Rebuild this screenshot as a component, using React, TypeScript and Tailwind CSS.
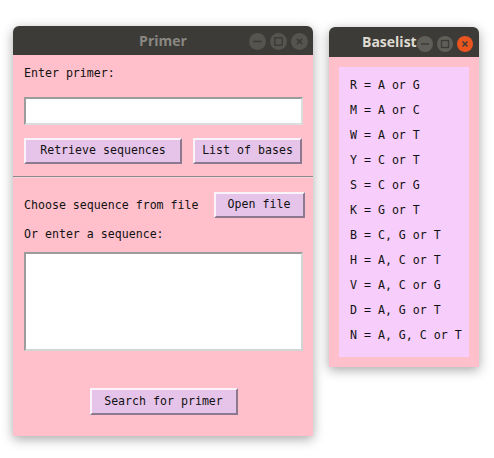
import React from "react";

const mono = { fontFamily: '"DejaVu Sans Mono", "Liberation Mono", monospace' };

function TitleButtons({ active, size }: { active: boolean; size: number }) {
  const base = active ? "#5f5e59" : "#55544f";
  const glyph = "#3c3b37";
  const s = size;
  return (
    <div className="flex gap-[4px]">
      <svg width={s} height={s} viewBox="0 0 16 16">
        <circle cx="8" cy="8" r="8" fill={base} />
        <line x1="4" y1="8" x2="12" y2="8" stroke={glyph} strokeWidth="1.5" />
      </svg>
      <svg width={s} height={s} viewBox="0 0 16 16">
        <circle cx="8" cy="8" r="8" fill={base} />
        <rect x="4.5" y="4.5" width="7" height="7" fill="none" stroke={glyph} strokeWidth="1.3" />
      </svg>
      <svg width={s} height={s} viewBox="0 0 16 16">
        <circle cx="8" cy="8" r="8" fill={active ? "#e9541f" : base} />
        <line x1="5.5" y1="5.5" x2="10.5" y2="10.5" stroke={glyph} strokeWidth="1.5" />
        <line x1="10.5" y1="5.5" x2="5.5" y2="10.5" stroke={glyph} strokeWidth="1.5" />
      </svg>
    </div>
  );
}

function TkButton({ label, className }: { label: string; className?: string }) {
  return (
    <div
      className={
        "shrink-0 whitespace-nowrap flex items-center justify-center bg-[#e6c4ea] border-2 border-t-[#fbf3fa] border-l-[#fbf3fa] border-b-[#8c798f] border-r-[#8c798f] text-[#111] text-[11.6px] " +
        (className ?? "")
      }
      style={mono}
    >
      {label}
    </div>
  );
}

const bases = [
  "R = A or G",
  "M = A or C",
  "W = A or T",
  "Y = C or T",
  "S = C or G",
  "K = G or T",
  "B = C, G or T",
  "H = A, C or T",
  "V = A, C or G",
  "D = A, G or T",
  "N = A, G, C or T",
];

export default function App() {
  return (
    <div className="relative w-[494px] h-[458px] bg-white overflow-hidden">
      {/* Primer window */}
      <div className="absolute left-[13px] top-[26px] w-[300px] h-[410px] flex flex-col shadow-[0_3px_12px_rgba(0,0,0,0.35)] rounded-t-[6px]">
        <div className="h-[29px] bg-[#3c3b37] rounded-t-[6px] flex items-center relative">
          <div
            className="flex-1 text-center text-[14px] font-bold text-[#8a8882]"
            style={{ fontFamily: '"Open Sans", "DejaVu Sans", sans-serif' }}
          >
            Primer
          </div>
          <div className="absolute right-[5px] top-[7px]">
            <TitleButtons active={false} size={17} />
          </div>
        </div>
        <div className="flex-1 bg-[#ffc0cb] flex flex-col pl-[11px] pr-[10px] text-[#111] text-[11.6px]" style={mono}>
          <div className="mt-[10px] h-[16px] leading-[16px] whitespace-nowrap">Enter primer:</div>
          <div className="mt-[16px] h-[28px] bg-white border-2 border-t-[#9c9c9c] border-l-[#9c9c9c] border-b-[#dcdcdc] border-r-[#dcdcdc]" />
          <div className="mt-[13px] h-[26px] flex">
            <TkButton label="Retrieve sequences" className="w-[158px] h-[26px]" />
            <TkButton label="List of bases" className="w-[109px] h-[26px] ml-auto mr-[1px]" />
          </div>
          <div className="mt-[12px] -ml-[11px] -mr-[10px] h-[2px] border-t border-t-[#8e8a8b] border-b border-b-[#f3d3d9]" />
          <div className="mt-[14px] h-[26px] flex items-center">
            <div className="h-[16px] leading-[16px] whitespace-nowrap shrink-0">Choose sequence from file</div>
            <TkButton label="Open file" className="w-[91px] h-[26px] ml-[15px]" />
          </div>
          <div className="mt-[8px] h-[16px] leading-[16px] whitespace-nowrap">Or enter a sequence:</div>
          <div className="mt-[10px] h-[99px] bg-white border-2 border-t-[#9c9c9c] border-l-[#9c9c9c] border-b-[#d4d4d4] border-r-[#d4d4d4]" />
          <div className="mt-[37px] flex justify-center">
            <TkButton label="Search for primer" className="w-[148px] h-[27px]" />
          </div>
        </div>
      </div>

      {/* Baselist window */}
      <div className="absolute left-[329px] top-[27px] w-[150px] h-[340px] flex flex-col shadow-[0_3px_12px_rgba(0,0,0,0.35)] rounded-t-[6px]">
        <div className="h-[30px] bg-[#3c3b37] rounded-t-[6px] flex items-center relative">
          <div
            className="absolute left-[33px] top-[6px] text-[14px] font-bold text-[#dfdbd2] leading-[18px]"
            style={{ fontFamily: '"Open Sans", "DejaVu Sans", sans-serif' }}
          >
            Baselist
          </div>
          <div className="absolute right-[6px] top-[9px]">
            <TitleButtons active={true} size={16} />
          </div>
        </div>
        <div className="flex-1 bg-[#ffc0cb] p-[10px]">
          <div className="h-full bg-[#f7cdfb] pt-[6px] pl-[11px] text-[#111] text-[11.6px]" style={mono}>
            {bases.map((b) => (
              <div key={b} className="h-[25px] leading-[25px] whitespace-pre">
                {b}
              </div>
            ))}
          </div>
        </div>
      </div>
    </div>
  );
}
